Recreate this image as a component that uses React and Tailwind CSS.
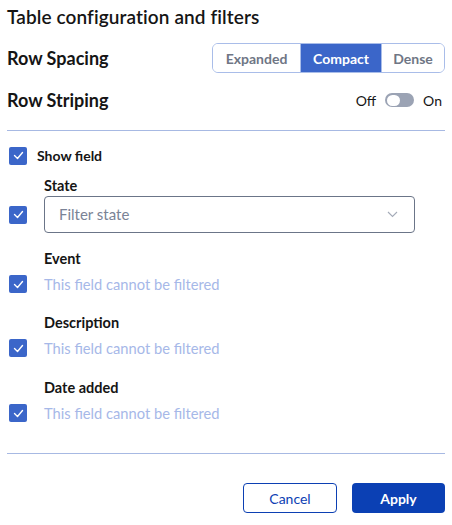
import React, { useState } from 'react';

const FIELDS = [
  { name: 'Event', gap: 'mt-[17px]' },
  { name: 'Description', gap: 'mt-[19px]' },
  { name: 'Date added', gap: 'mt-[20px]' },
];

const Check = () => (
  <span className="flex h-[18px] w-[18px] shrink-0 items-center justify-center rounded-[2px] bg-[#3b66c9]">
    <svg width="11" height="9" viewBox="0 0 11 9" fill="none">
      <path d="M1.5 4.5l3 3 5-6" stroke="#fff" strokeWidth="1.4" strokeLinecap="round" strokeLinejoin="round" />
    </svg>
  </span>
);

const SPACINGS = ['Expanded', 'Compact', 'Dense'];

export default function App() {
  const [spacing, setSpacing] = useState('Compact');
  const [striped, setStriped] = useState(false);

  return (
    <div className="h-[525px] w-[452px] bg-white px-[7px] pt-[6px] font-['Lato','Noto_Sans',sans-serif] text-[#151515]">
      <h2 className="text-[19px] font-semibold leading-[22px] tracking-[0.1px]">Table configuration and filters</h2>

      <div className="mt-[15px] flex h-[30px] items-center justify-between">
        <span className="text-[18px] font-bold">Row Spacing</span>
        <div className="flex h-[30px] overflow-hidden rounded-[6px] border border-[#a9bde9] text-[14px] font-bold">
          {SPACINGS.map((s, i) => (
            <button
              key={s}
              onClick={() => setSpacing(s)}
              className={
                'flex items-center justify-center ' +
                (i === 0 ? 'w-[87px] ' : i === 1 ? 'w-[81px] ' : 'w-[63px] ') +
                (i > 0 ? 'border-l border-[#a9bde9] ' : '') +
                (spacing === s ? 'bg-[#3b66c9] text-white' : 'bg-white text-[#6f7685]')
              }
            >
              {s}
            </button>
          ))}
        </div>
      </div>

      <div className="mt-[19px] flex h-[16px] items-center justify-between">
        <span className="text-[18px] font-bold">Row Striping</span>
        <div className="flex items-center pr-[3px] text-[14px]">
          <span>Off</span>
          <button
            onClick={() => setStriped(!striped)}
            className={'ml-[9px] mr-[9px] flex h-[14px] w-[29px] items-center rounded-full px-[2px] ' + (striped ? 'justify-end bg-[#3b66c9]' : 'justify-start bg-[#9ba3b4]')}
          >
            <span className="h-[11px] w-[13px] rounded-full bg-white" />
          </button>
          <span>On</span>
        </div>
      </div>

      <div className="mt-[22px] border-t border-[#a7b9e3]" />

      <div className="mt-[14px] flex items-center gap-[10px] pl-[2px]">
        <Check />
        <span className="text-[14px] font-bold">Show field</span>
      </div>

      <div className="mt-[11px] pl-[37px] text-[14.5px] font-bold leading-[18px]">State</div>
      <div className="mt-[1px] flex items-center gap-[17px] pl-[2px]">
        <Check />
        <div className="flex h-[37px] w-[371px] items-center justify-between rounded-[4px] border border-[#6b7588] pl-[14px] pr-[16px] text-[15px] text-[#7a8396]">
          <span>Filter state</span>
          <svg width="11" height="7" viewBox="0 0 11 7" fill="none">
            <path d="M1 1l4.5 4.5L10 1" stroke="#a4abb8" strokeWidth="1.1" />
          </svg>
        </div>
      </div>

      {FIELDS.map((f) => (
        <div key={f.name} className={f.gap}>
          <div className="pl-[37px] text-[14.5px] font-bold leading-[18px]">{f.name}</div>
          <div className="mt-[5px] flex items-center gap-[17px] pl-[2px]">
            <Check />
            <span className="text-[14.7px] text-[#a6b8e8]">This field cannot be filtered</span>
          </div>
        </div>
      ))}

      <div className="mt-[29px] border-t border-[#a7b9e3]" />

      <div className="mt-[29px] flex justify-end gap-[15px]">
        <button className="h-[30px] w-[94px] rounded-[4px] border border-[#0c40b3] text-[14px] text-[#0c40b3]">Cancel</button>
        <button className="h-[30px] w-[93px] rounded-[4px] bg-[#0b40b4] text-[14px] font-bold text-white">Apply</button>
      </div>
    </div>
  );
}
